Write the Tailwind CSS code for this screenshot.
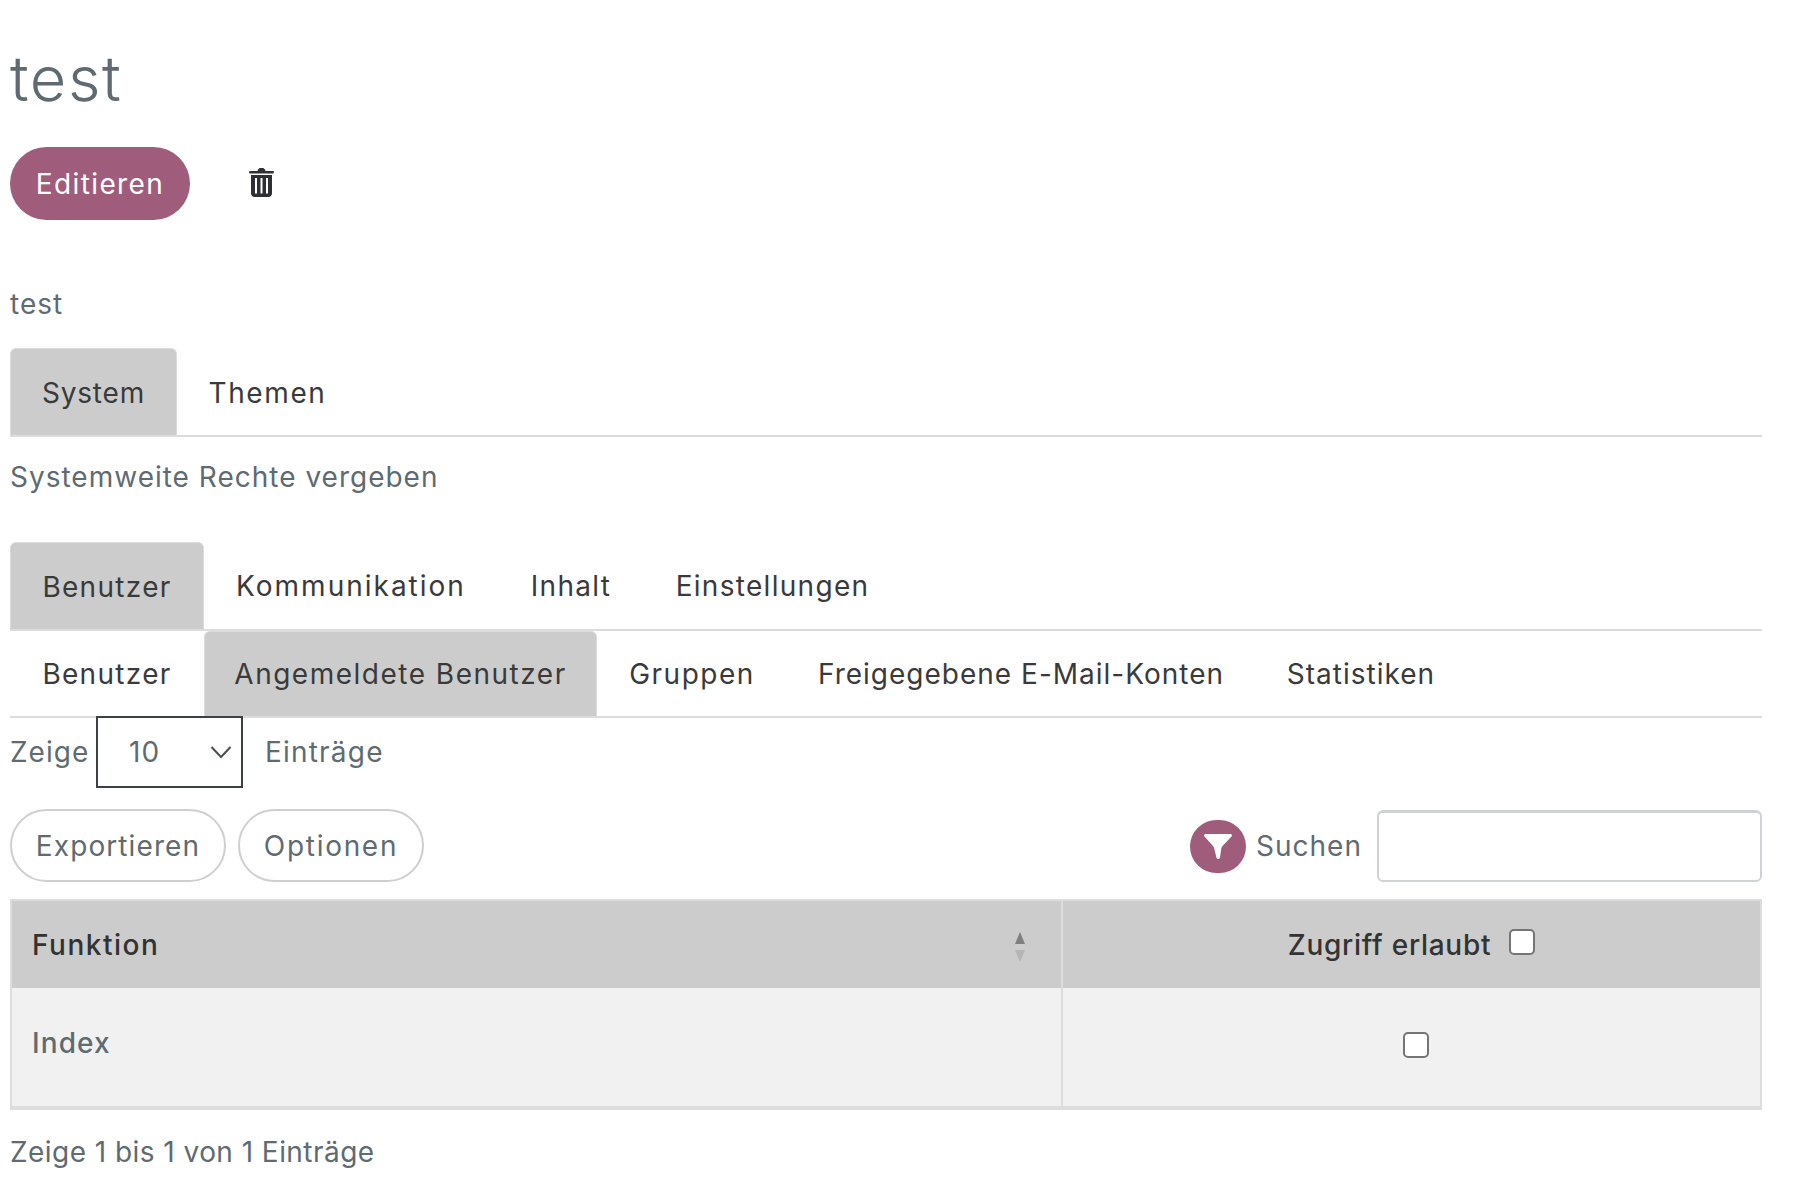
<!DOCTYPE html>
<html lang="de">
<head>
    <meta charset="UTF-8">
    <title>test</title>
    <script src="https://cdn.jsdelivr.net/npm/@tailwindcss/browser@4"></script>
</head>
<body class="bg-white font-['Inter',sans-serif] text-[28px] tracking-[1px] text-[#5f6b70] h-[1180px] overflow-hidden">
<div class="pl-[10px] pr-[34px]">
    <h1 class="pt-[36px] h-[147px] text-[63px] leading-[84px] font-light tracking-[1.6px] text-[#5f6b70]">test</h1>

    <div class="flex items-center h-[73px]">
        <button class="w-[180px] h-[73px] rounded-full bg-[#a05c7b] text-white tracking-[1.4px]">Editieren</button>
        <svg class="ml-[59px] -mt-[2px] w-[25px] h-[29px]" viewBox="0 0 25 29" fill="#2f3033">
            <path d="M9 1.500C9.500.6 10.500 0 11.500 0h2c1 0 2 .6 2.500 1.500L16.500 3h7c.8 0 1.500.6 1.500 1.200S24.300 5.500 23.500 5.500h-22C.7 5.500 0 5 0 4.200S.7 3 1.500 3h7z"/>
            <path fill-rule="evenodd" d="M2 7h21v18.500c0 1.900-1.600 3.500-3.500 3.500h-14C3.600 29 2 27.400 2 25.500zM6 10v15.500h2V10zm5.500 0v15.500h2V10zm5.500 0v15.500h2V10z"/>
        </svg>
    </div>

    <p class="mt-[65px] h-[39px] leading-[38px]">test</p>

    <div class="mt-[24px] flex h-[89px] border-b-2 border-[#dcdcdc] text-[#3a3a3a] tracking-[1.3px]">
        <a class="flex items-center justify-center pt-[2px] w-[167px] bg-[#cccccc] rounded-t-[6px] border border-b-0 border-[#dcdcdc] tracking-[0.8px]">System</a>
        <a class="flex items-center justify-center pt-[2px] w-[181px] tracking-[1.6px]">Themen</a>
    </div>

    <p class="mt-[20px] h-[40px] leading-[40px]">Systemweite Rechte vergeben</p>

    <div class="mt-[45px] flex h-[89px] border-b-2 border-[#dcdcdc] text-[#3a3a3a] tracking-[1.3px]">
        <a class="flex items-center justify-center pt-[1px] w-[194px] bg-[#cccccc] rounded-t-[6px] border border-b-0 border-[#dcdcdc]">Benutzer</a>
        <a class="flex items-center justify-center pt-[1px] w-[294px] tracking-[2px]">Kommunikation</a>
        <a class="flex items-center justify-center pt-[1px] w-[146px]">Inhalt</a>
        <a class="flex items-center justify-center pt-[1px] w-[257px]">Einstellungen</a>
    </div>

    <div class="flex h-[87px] border-b-2 border-[#dcdcdc] text-[#3a3a3a] tracking-[1.3px]">
        <a class="flex items-center justify-center w-[194px]">Benutzer</a>
        <a class="flex items-center justify-center w-[393px] bg-[#cccccc] rounded-t-[6px] border border-b-0 border-[#dcdcdc] tracking-[1.5px]">Angemeldete Benutzer</a>
        <a class="flex items-center justify-center w-[190px] tracking-[1.5px]">Gruppen</a>
        <a class="flex items-center justify-center w-[468px] tracking-[1px]">Freigegebene E-Mail-Konten</a>
        <a class="flex items-center justify-center w-[212px] tracking-[1px]">Statistiken</a>
    </div>

    <div class="flex items-center h-[72px] -mt-[2px]">
        <span class="w-[86px]">Zeige</span>
        <div class="w-[147px] h-[72px] border-2 border-[#3c4146] flex items-center justify-between pl-[31px] pr-[9px] bg-white">
            <span>10</span>
            <svg class="w-[22px] h-[14px]" viewBox="0 0 22 14" fill="none" stroke="#4a4f54" stroke-width="2"><path d="M1.500 2l9.500 10 9.500-10"/></svg>
        </div>
        <span class="ml-[22px] tracking-[1.2px]">Einträge</span>
    </div>

    <div class="mt-[21px] flex items-center h-[73px]">
        <button class="w-[216px] h-[73px] rounded-full border-2 border-[#cfcfcf] tracking-[1.1px]">Exportieren</button>
        <button class="ml-[12px] w-[186px] h-[73px] rounded-full border-2 border-[#cfcfcf] tracking-[1.7px]">Optionen</button>
        <div class="ml-auto flex items-center">
            <span class="w-[56px] h-[53px] mt-[2px] rounded-full bg-[#a05c7b] flex items-center justify-center">
                <svg class="w-[28px] h-[25px]" viewBox="0 0 28 25" fill="white"><path d="M1.500 0h25c1.300 0 1.900 1.500 1 2.500L18.500 12c-.6.7-1 1.500-1.200 2.500L16 23.500c-.3 2-3 2-3.500.3l-2.300-9.300c-.2-1-.6-1.800-1.200-2.500L.5 2.500C-.4 1.500.2 0 1.500 0z"/></svg>
            </span>
            <span class="ml-[10px] w-[121px]">Suchen</span>
            <input type="text" class="w-[385px] h-[72px] mt-[1px] rounded-[6px] border-2 border-t-[3px] border-[#d0d3d6] bg-white">
        </div>
    </div>

    <table class="mt-[17px] w-[1752px] table-fixed border-collapse border-t-2 border-x-2 border-b-4 border-[#dddddd]">
        <thead>
            <tr class="bg-[#cccccc] h-[88px] text-[#333333] font-medium">
                <th class="w-[1051px] relative text-left pl-[20px] font-medium tracking-[1.5px] border-r-2 border-[#dddddd]">
                    Funktion
                    <svg class="absolute right-[35px] top-[31px] w-[12px] h-[30px]" viewBox="0 0 12 30">
                        <path d="M6 0l5 12H1z" fill="#7f7f7f"/>
                        <path d="M6 30l5-12H1z" fill="#b5b5b5"/>
                    </svg>
                </th>
                <th class="font-medium tracking-[0.75px]">
                    <span class="inline-flex items-center">
                        <span>Zugriff erlaubt</span>
                        <input type="checkbox" class="ml-[18px] -mt-[6px] w-[26px] h-[26px] appearance-none rounded-[5px] border-2 border-[#757575] bg-white">
                    </span>
                </th>
            </tr>
        </thead>
        <tbody>
            <tr class="bg-[#f1f1f1] h-[120px]">
                <td class="pl-[20px] pb-[8px] font-medium tracking-[1.1px] border-r-2 border-[#dddddd]">Index</td>
                <td class="pl-[8px] pb-[8px] text-center">
                    <input type="checkbox" class="w-[26px] h-[26px] appearance-none rounded-[5px] border-2 border-[#757575] bg-white align-middle">
                </td>
            </tr>
        </tbody>
    </table>

    <p class="mt-[22px] leading-[40px] tracking-[0.45px]">Zeige 1 bis 1 von 1 Einträge</p>
</div>
</body>
</html>
